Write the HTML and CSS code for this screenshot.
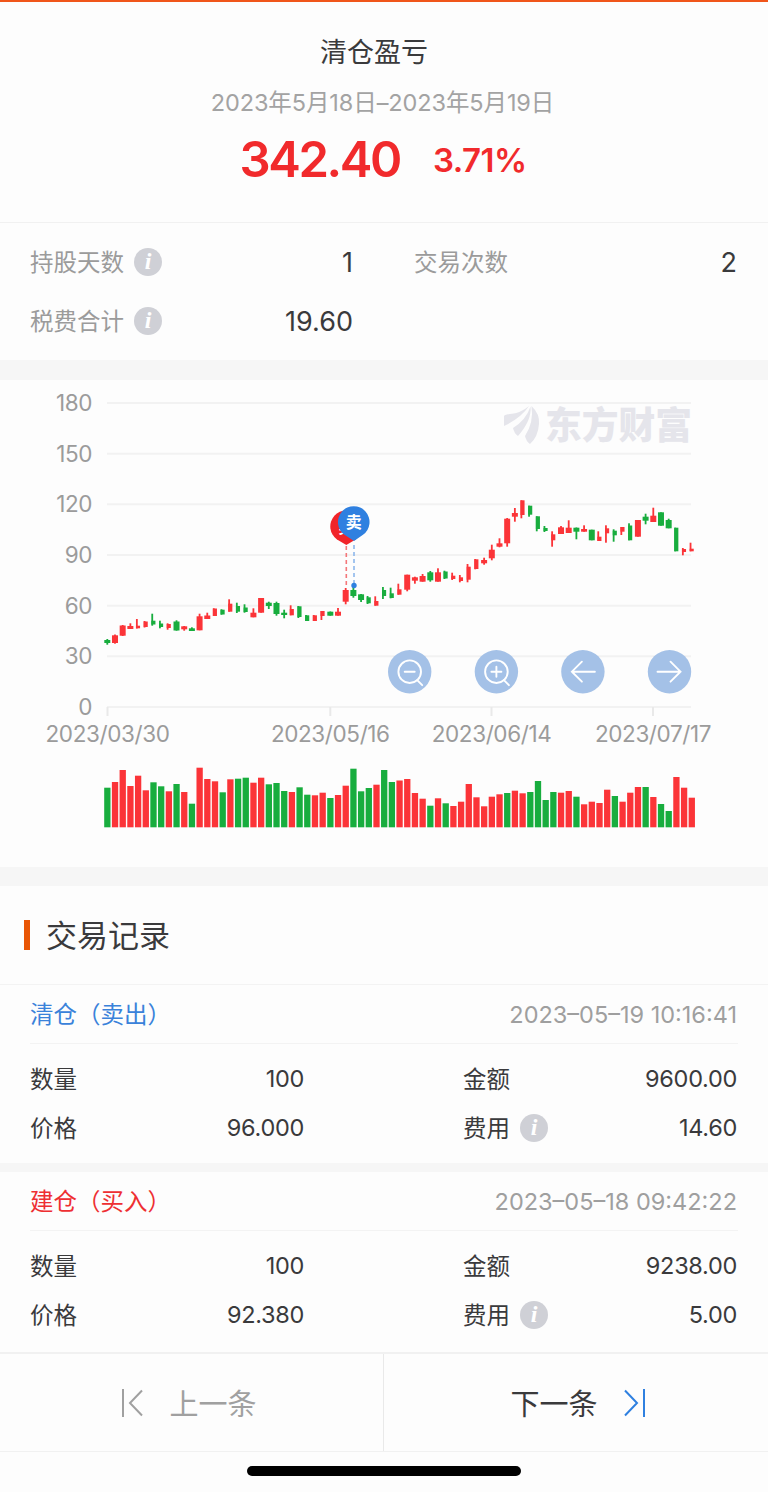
FILE: index.html
```html
<!DOCTYPE html>
<html lang="zh-CN">
<head>
    <meta charset="UTF-8">
    <meta name="viewport" content="width=device-width, initial-scale=1.0">
    <title>清仓盈亏</title>
    <link rel="stylesheet" href="styles.css">
</head>
<body>
    <header class="summary">
        <h1 class="summary-title">清仓盈亏</h1>
        <div class="summary-period">2023年5月18日–2023年5月19日</div>
        <div class="summary-profit">
            <span class="amount">342.40</span>
            <span class="percent">3.71%</span>
        </div>
    </header>

    <section class="stats">
        <div class="stat">
            <span class="label">持股天数</span><i class="info">i</i>
            <span class="value">1</span>
        </div>
        <div class="stat">
            <span class="label">交易次数</span>
            <span class="value">2</span>
        </div>
        <div class="stat">
            <span class="label">税费合计</span><i class="info">i</i>
            <span class="value">19.60</span>
        </div>
    </section>

    <section class="chart">
        <svg id="chart" width="768" height="487" viewBox="0 380 768 487">
            <g id="grid" class="grid"></g>
            <g class="watermark">
                <path d="M504 426 V416 Q505 414.500 510 414 Q521 413 529 406 Q521 418 504 426 Z"/>
                <path d="M513 428 Q526 420 530.500 406.500 Q532 420 518 436 Q514 433 513 428 Z"/>
                <path d="M531.500 406 Q540 414 539 424 Q538 437 530 444 Q526 441 525 436 Q534 422 531.500 406 Z"/>
                <text x="545" y="439" textLength="147" lengthAdjust="spacingAndGlyphs">东方财富</text>
            </g>
            <g id="candles"></g>
            <g id="volumes"></g>
            <g class="pin-buy">
                <line x1="346.300" y1="546" x2="346.300" y2="588"/>
                <path d="M346.300 545 L337 539.500 A16 16 0 1 1 355.600 539.500 Z"/>
                <text x="345.500" y="533">买</text>
            </g>
            <g class="pin-sell">
                <line x1="354" y1="545" x2="354" y2="583"/>
                <circle cx="354" cy="585.500" r="2.700"/>
                <path d="M354 541 L344.500 534.800 A15.800 15.800 0 1 1 363 534.800 Z"/>
                <text x="353.700" y="528">卖</text>
            </g>
            <g class="tool" transform="translate(409.700 671.700)">
                <circle class="tool-bg" r="21.700"/>
                <circle r="11.300"/>
                <path d="M-5 0 H5 M7.500 8.500 L12.500 13.500"/>
            </g>
            <g class="tool" transform="translate(496.400 671.700)">
                <circle class="tool-bg" r="21.700"/>
                <circle r="11.300"/>
                <path d="M-5 0 H5 M0 -5 V5 M7.500 8.500 L12.500 13.500"/>
            </g>
            <g class="tool" transform="translate(582.900 671.700)">
                <circle class="tool-bg" r="21.700"/>
                <path d="M12 0 H-11 M-1 -10 L-11 0 L-1 10"/>
            </g>
            <g class="tool" transform="translate(669.500 671.700)">
                <circle class="tool-bg" r="21.700"/>
                <path d="M-12 0 H11 M1 -10 L11 0 L1 10"/>
            </g>
        </svg>
    </section>

    <section class="records">
        <h2 class="records-title"><span>交易记录</span></h2>

        <div class="record">
            <div class="record-head">
                <span class="sell">清仓（卖出）</span>
                <span class="time">2023–05–19 10:16:41</span>
            </div>
            <div class="record-body">
                <div class="cell"><span class="name">数量</span><span class="value">100</span></div>
                <div class="cell"><span class="name">金额</span><span class="value">9600.00</span></div>
                <div class="cell"><span class="name">价格</span><span class="value">96.000</span></div>
                <div class="cell"><span class="name">费用</span><i class="info">i</i><span class="value">14.60</span></div>
            </div>
        </div>

        <div class="record">
            <div class="record-head">
                <span class="buy">建仓（买入）</span>
                <span class="time">2023–05–18 09:42:22</span>
            </div>
            <div class="record-body">
                <div class="cell"><span class="name">数量</span><span class="value">100</span></div>
                <div class="cell"><span class="name">金额</span><span class="value">9238.00</span></div>
                <div class="cell"><span class="name">价格</span><span class="value">92.380</span></div>
                <div class="cell"><span class="name">费用</span><i class="info">i</i><span class="value">5.00</span></div>
            </div>
        </div>
    </section>

    <nav class="pager">
        <a class="prev">
            <svg width="24" height="28" viewBox="0 0 24 28"><path d="M2 0 V28 M21 1.500 L9 14 L21 26.500"/></svg>
            <span>上一条</span>
        </a>
        <a class="next">
            <span>下一条</span>
            <svg width="24" height="28" viewBox="0 0 24 28"><path d="M22 0 V28 M3 1.500 L15 14 L3 26.500"/></svg>
        </a>
    </nav>
    <div class="home-bar"></div>

    <script src="chart.js"></script>
</body>
</html>
```

FILE: styles.css
```css
* {
    box-sizing: border-box;
}

body {
    margin: 0;
    height: 1492px;
    overflow: hidden;
    background-color: #fdfdfd;
    color: #3a3a3c;
    font-family: Inter, 'Noto Sans CJK SC', sans-serif;
    font-size: 23.5px;
}

.summary {
    height: 223px;
    border-top: 2px solid #f0551a;
    border-bottom: 1px solid #f1f1f1;
    text-align: center;
}

.summary-title {
    margin: 31px 0 0;
    padding-right: 20px;
    font-size: 27px;
    line-height: 40px;
    font-weight: 400;
}

.summary-period {
    margin-top: 14px;
    padding-right: 3px;
    line-height: 32px;
    color: #a3a3a3;
    font-size: 23.5px;
    letter-spacing: -0.1px;
}

.summary-profit {
    display: flex;
    justify-content: center;
    align-items: center;
    gap: 33px;
    margin-top: 11px;
    padding-right: 2px;
    color: #f12a2c;
    font-weight: 600;
    line-height: 60px;
}

.amount {
    font-size: 49px;
    letter-spacing: -2.4px;
}

.percent {
    font-size: 33px;
    letter-spacing: -0.5px;
}

.stats {
    display: grid;
    grid-template-columns: 323px 323px;
    column-gap: 61px;
    height: 137px;
    padding: 10px 30px 0;
    grid-auto-rows: 59px;
}

.stat,
.cell {
    display: flex;
    align-items: center;
}

.label {
    padding-bottom: 3px;
    color: #9b9b9b;
}

.name,
.sell,
.buy {
    padding-bottom: 2px;
}

.value {
    margin-left: auto;
}

.stat .value {
    font-size: 27px;
}

.cell .value {
    letter-spacing: -0.3px;
}

.info {
    width: 28px;
    height: 28px;
    margin-left: 10px;
    border-radius: 50%;
    background-color: #cfd0d6;
    color: #fff;
    font: italic bold 24px/27px 'Liberation Serif', serif;
    text-align: center;
}

.stat .info {
    margin-top: -2px;
}

.chart {
    height: 526px;
    border-top: 20px solid #f6f6f6;
    border-bottom: 19px solid #f6f6f6;
}

.chart svg {
    display: block;
}

.chart text {
    font-size: 22.5px;
    fill: #9b9b9b;
}

.grid text {
    letter-spacing: -0.4px;
}

.grid line {
    stroke: #f2f2f2;
    stroke-width: 2;
}

.grid .tick {
    stroke: #e9e9e9;
}

.watermark {
    fill: #e5e5eb;
}

.chart .watermark text {
    font-family: 'Noto Sans CJK SC', sans-serif;
    font-size: 37px;
    font-weight: 900;
    fill: #e5e5eb;
}

.up {
    fill: #fb3438;
}

.down {
    fill: #18ad3e;
}

.pin-buy {
    fill: #f12429;
}

.pin-sell {
    fill: #2f80e0;
}

.pin-buy line {
    stroke: #f4777a;
    stroke-width: 1.6;
    stroke-dasharray: 4 3;
}

.pin-sell line {
    stroke: #8db7ec;
    stroke-width: 1.6;
    stroke-dasharray: 4 3;
}

.chart .pin-buy text,
.chart .pin-sell text {
    font-size: 16px;
    font-weight: 700;
    text-anchor: middle;
    fill: #fff;
}

.chart .pin-buy text {
    font-size: 14px;
}

.tool {
    fill: none;
    stroke: #fff;
    stroke-width: 1.9;
    stroke-linecap: round;
}

.tool .tool-bg {
    fill: #a4c1e7;
    stroke: none;
}

.records-title {
    display: flex;
    align-items: center;
    gap: 16px;
    height: 99px;
    margin: 0;
    padding-left: 24px;
    border-bottom: 1px solid #f3f3f3;
    font-size: 31px;
    font-weight: 400;
}

.records-title span {
    padding-bottom: 3px;
}

.records-title::before {
    content: '';
    width: 6px;
    height: 30px;
    background-color: #e95504;
}

.record {
    height: 187px;
    padding: 0 30px;
    border-bottom: 9px solid #f6f6f6;
}

.record:last-child {
    height: 182px;
    border-bottom: 2px solid #f1f1f1;
}

.record-head {
    display: flex;
    justify-content: space-between;
    align-items: center;
    height: 59px;
    border-bottom: 1px solid #f3f3f3;
}

.time {
    margin-right: 1px;
    color: #9f9f9f;
}

.sell {
    color: #3a82da;
}

.buy {
    color: #ee2f32;
}

.record-body {
    display: grid;
    grid-template-columns: 274px 274px;
    grid-auto-rows: 49px;
    column-gap: 159px;
    padding-top: 10px;
}

.pager {
    display: flex;
    height: 98px;
    border-bottom: 1px solid #f1f1f1;
    font-size: 29px;
}

.pager a {
    display: flex;
    width: 50%;
    align-items: center;
    justify-content: center;
    gap: 24px;
}

.pager span {
    padding-bottom: 2px;
}

.pager svg {
    fill: none;
    stroke: currentColor;
    stroke-width: 2;
}

.pager .prev {
    padding-right: 5px;
    border-right: 1px solid #e9e9e9;
    color: #a0a0a0;
}

.pager .next {
    padding-left: 4px;
}

.next svg {
    color: #2f80e0;
}

.home-bar {
    width: 274px;
    height: 10px;
    margin: 14px auto 0;
    border-radius: 5px;
    background-color: #000;
}
```

FILE: chart.js
```js
// kind, high, open/close top, open/close bottom, low, volume top
// r / g = full body, R / G = narrow body drawn right of the wick
const bars = [
    ['g', 639, 640, 643, 644.7, 787.7],
    ['r', 634.5, 635.3, 643, 643.7, 782],
    ['r', 625, 625.5, 635.7, 636, 770],
    ['r', 623.3, 626, 629, 629, 786],
    ['R', 619, 625.7, 628.3, 628.5, 775.7],
    ['R', 621, 621.5, 627, 627.5, 790.3],
    ['G', 613.7, 620.7, 624.5, 625.7, 782.3],
    ['G', 620.7, 623.5, 627, 628.3, 786.3],
    ['R', 623.3, 624, 628, 629.7, 791.3],
    ['g', 620.3, 621.5, 630.5, 630.7, 784],
    ['r', 626, 626.3, 629.3, 630.7, 792],
    ['g', 627.3, 628.3, 631, 631, 803.7],
    ['r', 613.7, 616.3, 630.3, 630.3, 767.7],
    ['r', 612.7, 615.5, 619, 619, 779],
    ['R', 608.3, 608.5, 616, 616, 781.3],
    ['G', 609.3, 609.7, 614.5, 614.7, 792.3],
    ['R', 599.3, 603.7, 611.7, 611.7, 779.3],
    ['G', 602.7, 606, 611.7, 613, 778.7],
    ['G', 604.3, 607.5, 612, 612.7, 777.7],
    ['r', 608.3, 612.7, 617.3, 617.3, 782.7],
    ['r', 598, 598, 612.7, 612.7, 777.7],
    ['g', 601.7, 602.7, 606, 609, 784.3],
    ['g', 601.7, 603, 614, 615.7, 783],
    ['g', 609.7, 612.7, 615, 618.3, 791],
    ['R', 605.3, 609, 615.3, 615.3, 792],
    ['G', 606, 606.3, 617, 618, 787.3],
    ['G', 615, 615.3, 621, 621, 794.7],
    ['R', 615, 615.3, 621, 621, 795.3],
    ['R', 611, 611, 616, 620, 792.7],
    ['g', 611.5, 611.7, 615.7, 615.7, 798],
    ['r', 608, 611.7, 615.7, 615.7, 795],
    ['r', 588, 590, 601.7, 604.3, 785.7],
    ['g', 587, 590, 596, 597.7, 768.7],
    ['g', 594, 594.3, 600, 602, 791.3],
    ['G', 596, 597.3, 603.3, 604, 788],
    ['R', 596.3, 601, 605.7, 605.7, 784.7],
    ['G', 587, 590, 596, 599, 770],
    ['G', 587.7, 593.3, 598, 598.3, 782],
    ['R', 583.7, 589.3, 594.7, 594.7, 780.5],
    ['r', 574.7, 574.7, 589.7, 591.3, 779],
    ['r', 576.7, 577.3, 580.7, 583.7, 793],
    ['r', 574, 576, 581.7, 581.7, 798.7],
    ['g', 571, 572.3, 580.3, 581.7, 805.7],
    ['r', 568.3, 572.3, 581.7, 581.7, 798.3],
    ['G', 570.7, 571.5, 578.5, 579, 803.3],
    ['R', 572.7, 575.7, 579, 580, 806],
    ['R', 575, 577.3, 581, 582.3, 801.7],
    ['R', 564, 566.7, 579.7, 582.3, 784],
    ['R', 559, 559.3, 569, 569.3, 797.3],
    ['r', 557.7, 560, 563.3, 564.7, 806.3],
    ['r', 544.7, 549.7, 558.3, 560.3, 796.7],
    ['r', 538.3, 543.3, 546.7, 547.3, 794.3],
    ['r', 518, 518.7, 543.3, 546.7, 793],
    ['r', 508, 513, 516.7, 521.7, 790.7],
    ['R', 500.3, 500.3, 515, 518.3, 793.3],
    ['G', 505.7, 505.7, 514.7, 516.7, 792],
    ['G', 516.3, 516.3, 529, 531.3, 781],
    ['G', 526, 528, 531, 532, 800],
    ['R', 531.3, 534.3, 540.3, 546.7, 792],
    ['r', 526, 527.3, 534, 534, 792.7],
    ['r', 520.3, 527.7, 533, 533, 791],
    ['g', 527.5, 527.7, 531.7, 539.3, 796.7],
    ['r', 525.3, 529, 531.7, 531.7, 804.3],
    ['g', 529.7, 529.7, 540.3, 540.3, 801.7],
    ['R', 531.3, 536.7, 541, 541, 803],
    ['R', 525.3, 528.3, 533.3, 542.7, 789.7],
    ['G', 529.3, 530.7, 535.3, 541.7, 796],
    ['R', 527, 527, 531.7, 535, 801.7],
    ['G', 523.3, 525.5, 540.3, 540.3, 792.7],
    ['r', 520, 520, 536.7, 536.7, 787],
    ['g', 513.7, 516.7, 520.7, 524.3, 787],
    ['r', 507.7, 515.7, 522, 522, 797],
    ['g', 512.3, 512.3, 525.7, 525.7, 804],
    ['g', 518.7, 520, 528.3, 528.3, 811],
    ['G', 527.7, 527.7, 551.3, 551.3, 777],
    ['R', 548, 549, 552, 555.3, 787.7],
    ['R', 542.7, 548.7, 551.3, 551.3, 797.7]
];

// volume colours do not always follow the candle colour
const volumeColors = 'grrrrrggrgrgrrrg' + 'rggrrgggrggrrgrr' +
    'gggrggrrrrgrgrrr' + 'rrrrgrrggggrrgrr' + 'rrgrrrgrggrrr';

const svgNS = 'http://www.w3.org/2000/svg';
const firstX = 107.3;
const step = 7.69;
const baseY = 827.3;

function add(parent, name, attrs, text) {
    const el = document.createElementNS(svgNS, name);
    for (const key in attrs) {
        el.setAttribute(key, attrs[key]);
    }
    if (text) el.textContent = text;
    parent.appendChild(el);
}

function drawGrid() {
    const grid = document.getElementById('grid');
    for (let i = 0; i <= 6; i++) {
        const y = 707 - i * 50.67;
        add(grid, 'line', { x1: 107, x2: 691, y1: y, y2: y });
        add(grid, 'text', { x: 92, y: y + 8, 'text-anchor': 'end' }, String(i * 30));
    }

    const dates = [[107.5, '2023/03/30'], [330.3, '2023/05/16'], [491.5, '2023/06/14'], [653, '2023/07/17']];
    dates.forEach(([x, date]) => {
        add(grid, 'line', { class: 'tick', x1: x, x2: x, y1: 707, y2: 716 });
        add(grid, 'text', { x: x, y: 742, 'text-anchor': 'middle' }, date);
    });
}

function drawBars() {
    const candles = document.getElementById('candles');
    const volumes = document.getElementById('volumes');

    bars.forEach(([kind, high, top, bottom, low, volume], i) => {
        const x = firstX + i * step;
        const full = kind === kind.toLowerCase();
        const color = kind.toLowerCase() === 'r' ? 'up' : 'down';
        add(candles, 'rect', { class: color, x: full ? x - 0.9 : x - 2.1, y: high, width: 1.8, height: low - high });
        add(candles, 'rect', { class: color, x: full ? x - 3 : x - 2.1, y: top, width: full ? 6 : 4.1, height: bottom - top });

        const volumeColor = volumeColors[i] === 'r' ? 'up' : 'down';
        add(volumes, 'rect', { class: volumeColor, x: x - 3.1, y: volume, width: 6.3, height: baseY - volume });
    });
}

drawGrid();
drawBars();
```
